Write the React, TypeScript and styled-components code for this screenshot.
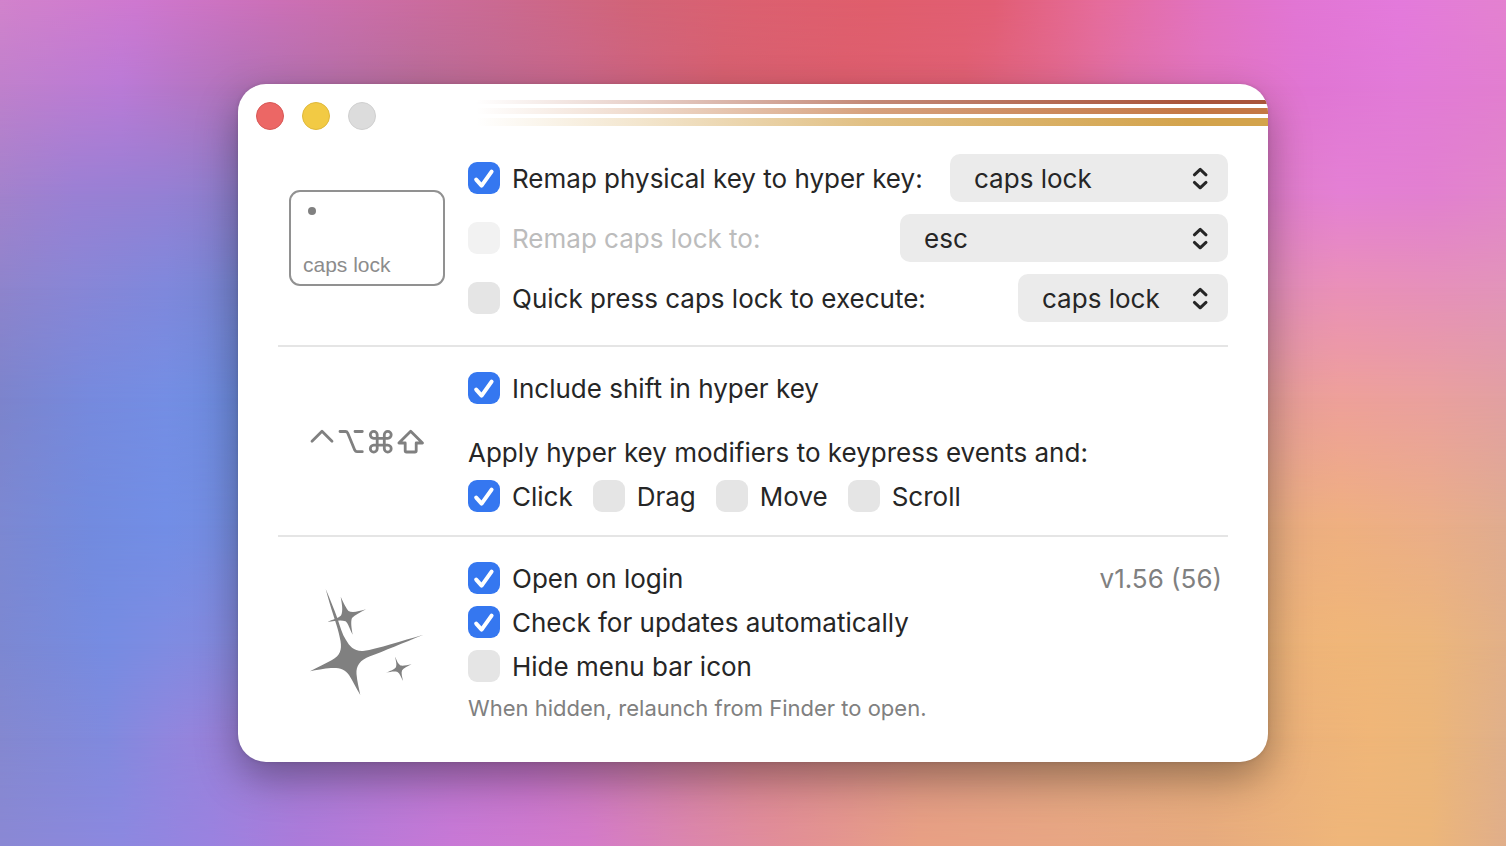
import React, { useId } from "react";
import styled, { createGlobalStyle } from "styled-components";

const GlobalStyle = createGlobalStyle`
  *, *::before, *::after { box-sizing: border-box; }
  body {
    margin: 0;
    font-family: Inter, "Liberation Sans", sans-serif;
    font-size: 26px;
    line-height: 32px;
    color: #262626;
  }
`;

const Desktop = styled.div`
  position: relative;
  isolation: isolate;
  min-height: 100vh;
  display: flex;
  align-items: center;
  justify-content: center;
  padding: 40px;
`;

const Wallpaper = styled.div`
  position: absolute;
  inset: 0;
  z-index: -1;
  overflow: hidden;
`;

/* One horizontal colour run; each band fades in over the one before it. */
const Band = styled.div<{ $colors: string; $from: number; $to: number }>`
  position: absolute;
  inset: 0;
  background: linear-gradient(90deg, ${(p) => p.$colors});
  mask-image: linear-gradient(180deg, transparent ${(p) => p.$from}%, #000 ${(p) => p.$to}%);
`;

const bands = [
  { from: -1, to: 0, colors: "#d283cc 0%, #cf78d0 9%, #cc70b8 18%, #cb6a92 33%, #d26478 42%, #dc6070 50%, #e05e6c 58%, #e25e74 66%, #e66c9c 73%, #e272c0 80%, #e276d4 86%, #e47adc 93%, #e482d0 100%" },
  { from: 0, to: 10, colors: "#c080cc 0%, #bb7ad6 8%, #b272b8 16%, #b86c98 28%, #c8668a 38%, #d66070 48%, #dd5e6e 56%, #e06074 64%, #e2688e 70%, #e070ac 75%, #e274c0 80%, #e075d4 87%, #e27ad8 93%, #e27ed0 100%" },
  { from: 10, to: 23, colors: "#a282cc 0%, #9a80d4 5%, #9480d4 11%, #8c7cc8 16%, #cc6a94 50%, #de7cc8 84%, #e480d4 89%, #e280d0 95%, #e286ca 100%" },
  { from: 23, to: 34, colors: "#8e84cc 0%, #8886d6 5%, #7f88dc 11%, #7684d0 16%, #c080a0 50%, #e08cb8 84%, #ea90b8 89%, #e690ba 95%, #e294ba 100%" },
  { from: 34, to: 47, colors: "#7c84cc 0%, #768ade 6%, #748ee4 11%, #6c8adc 16%, #a080c0 50%, #e49c98 84%, #eea09a 89%, #eaa09e 95%, #e2a0a2 100%" },
  { from: 47, to: 62, colors: "#7c88d2 0%, #728bdf 6%, #728ee6 11%, #748cde 16%, #a080c0 50%, #e8ac82 84%, #efb080 89%, #ebae88 95%, #e0ac90 100%" },
  { from: 62, to: 76, colors: "#7c88d2 0%, #768ce2 7%, #7e8ce2 11%, #8688dc 16%, #a080c0 50%, #ecb27a 84%, #f0b678 89%, #ecb67c 95%, #e2b088 100%" },
  { from: 76, to: 87, colors: "#8488d0 0%, #808ade 7%, #9086de 11%, #9c80d8 16%, #c074c8 35%, #da8890 50%, #dea47e 70%, #ecb27a 86%, #f0b678 91%, #ecb67a 95%, #e0b08a 100%" },
  { from: 87, to: 100, colors: "#8a88d4 0%, #8c88e0 8%, #9a82e0 14%, #ac7ada 20%, #c878d6 30%, #d47aca 39%, #dc86ac 46%, #e28e98 52%, #e8a084 61%, #e8a684 71%, #e6aa7e 80%, #efb67a 89%, #ecb67a 95%, #e0ae8a 100%" },
];

const Window = styled.main`
  width: 100%;
  max-width: 1030px;
  border-radius: 28px;
  background: #fff;
  overflow: hidden;
  box-shadow: 0 16px 40px rgba(0, 0, 0, 0.34), 0 0 4px rgba(0, 0, 0, 0.12);
`;

const TitleBar = styled.header`
  display: flex;
  align-items: flex-start;
  gap: 92px;
  height: 58px;
  padding: 16px 0 0 18px;
`;

const Lights = styled.div`
  display: flex;
  gap: 18px;
  padding-top: 2px;
`;

const Light = styled.button<{ $fill: string; $edge: string }>`
  width: 28px;
  height: 28px;
  padding: 0;
  border: 1px solid ${(p) => p.$edge};
  border-radius: 50%;
  background: ${(p) => p.$fill};
`;

const Stripes = styled.div`
  flex: 1;
  display: flex;
  flex-direction: column;
  gap: 4px;
`;

const Stripe = styled.div<{ $height: number; $color: string }>`
  height: ${(p) => p.$height}px;
  background: linear-gradient(
    90deg,
    ${(p) => p.$color}00 1%,
    ${(p) => p.$color}48 22%,
    ${(p) => p.$color}b0 50%,
    ${(p) => p.$color} 90%
  );
`;

const Content = styled.div`
  padding: 12px 40px 40px;
`;

const Section = styled.section`
  display: flex;
  gap: 12px;
  & + & {
    margin-top: 23px;
    padding-top: 25px;
    border-top: 2px solid #e5e5e5;
  }
`;

const Figure = styled.div`
  flex: 0 0 178px;
  display: flex;
  align-items: center;
  justify-content: center;
`;

const Fields = styled.div`
  flex: 1;
  min-width: 0;
  display: flex;
  flex-direction: column;
  gap: 12px;
`;

const Row = styled.div`
  display: flex;
  align-items: center;
  justify-content: space-between;
  gap: 20px;
`;

const Options = styled.div`
  display: flex;
  flex-wrap: wrap;
  gap: 20px;
`;

const Caption = styled.p`
  margin: 20px 0 0;
  height: 32px;
  padding-top: 1px;
`;

const Hint = styled.p`
  margin: 0;
  font-size: 22px;
  line-height: 28px;
  color: #808080;
`;

const Version = styled.span`
  height: 32px;
  padding: 1px 6px 0 0;
  color: #808080;
`;

const CheckLabel = styled.label<{ $disabled?: boolean }>`
  display: flex;
  align-items: center;
  gap: 12px;
  height: 32px;
  white-space: nowrap;
  color: ${(p) => (p.$disabled ? "#bcbcbc" : "#262626")};
`;

const CheckText = styled.span`
  padding-top: 2px;
`;

const Box = styled.span`
  display: grid;
  width: 32px;
  height: 32px;
  > * {
    grid-area: 1 / 1;
  }
  > svg {
    pointer-events: none;
    visibility: hidden;
  }
  > input:checked + svg {
    visibility: visible;
  }
`;

const BoxInput = styled.input`
  appearance: none;
  width: 32px;
  height: 32px;
  margin: 0;
  border-radius: 9px;
  background: #e5e5e5;
  &:checked {
    background: #3577f0;
  }
  &:disabled {
    background: #f2f2f2;
  }
`;

const SelectWrap = styled.div<{ $width: number }>`
  display: grid;
  align-items: center;
  width: ${(p) => p.$width}px;
  > * {
    grid-area: 1 / 1;
  }
  > svg {
    justify-self: end;
    margin-right: 18px;
    pointer-events: none;
  }
`;

const SelectInput = styled.select`
  appearance: none;
  width: 100%;
  height: 48px;
  padding: 2px 44px 0 24px;
  border: 0;
  border-radius: 10px;
  background: #ebebeb;
  color: #262626;
  font: inherit;
`;

const KeyCap = styled.div`
  display: flex;
  flex-direction: column;
  justify-content: space-between;
  width: 156px;
  height: 96px;
  padding: 15px 12px 7px;
  border: 2px solid #919191;
  border-radius: 11px;
  font-family: "Liberation Sans", sans-serif;
  font-size: 21px;
  line-height: 24px;
  color: #8c8c8c;
`;

const Led = styled.span`
  width: 8px;
  height: 8px;
  margin-left: 5px;
  border-radius: 50%;
  background: #808080;
`;

function Check({ label, checked, disabled }: { label: string; checked?: boolean; disabled?: boolean }) {
  const id = useId();
  return (
    <CheckLabel htmlFor={id} $disabled={disabled}>
      <Box>
        <BoxInput id={id} type="checkbox" defaultChecked={checked} disabled={disabled} />
        <svg width="32" height="32" viewBox="0 0 32 32" fill="none" stroke="#fff" strokeWidth="4" strokeLinecap="round" strokeLinejoin="round" aria-hidden="true">
          <path d="M8.2 17.6 13.6 23.6 23.6 9.6" />
        </svg>
      </Box>
      <CheckText>{label}</CheckText>
    </CheckLabel>
  );
}

function Select({ name, value, width }: { name: string; value: string; width: number }) {
  return (
    <SelectWrap $width={width}>
      <SelectInput aria-label={name} defaultValue={value}>
        <option>{value}</option>
      </SelectInput>
      <svg width="20" height="24" viewBox="0 0 20 24" fill="none" stroke="#262626" strokeWidth="3" strokeLinecap="round" strokeLinejoin="round" aria-hidden="true">
        <path d="M4.400 8.800 10.200 3.400 16 8.800M4.400 16.400 10.200 21.800 16 16.400" />
      </svg>
    </SelectWrap>
  );
}

function ModifierKeys() {
  return (
    <svg width="116" height="28" viewBox="309 428 116 28" fill="none" stroke="#808080" strokeWidth="2.8" strokeLinecap="round" strokeLinejoin="round" role="img" aria-label="Control, option, command, shift">
      <path d="M312 441.200 322 431.200 332 441.200" />
      <path d="M340 431.500H345.500Q347 431.500 347.700 433L354.800 450.200Q355.500 451.700 357 451.700H362.300M355 431.500H362.300" />
      <path d="M377.200 438.300H384.300V445.200H377.200ZM377.200 438.300H373.700A3.450 3.450 0 1 1 377.200 434.800ZM384.300 438.300V434.800A3.450 3.450 0 1 1 387.800 438.300ZM384.300 445.200H387.800A3.450 3.450 0 1 1 384.300 448.700ZM377.200 445.200V448.700A3.450 3.450 0 1 1 373.700 445.200Z" />
      <path d="M410.700 431.200 422.500 443H416.200V450.700Q416.200 452 414.900 452H406.500Q405.200 452 405.200 450.700V443H398.900Z" />
    </svg>
  );
}

function Sparkles() {
  return (
    <svg width="116" height="108" viewBox="310 588 116 108" fill="#808080" aria-hidden="true">
      <path d="M326.700 589C331 599 335 609 338.300 618C341 626 343 634 347 640C350.500 646 355 651.500 364 651C380 648.500 402 641 424.500 634.700C404 643 385 651 371 656.300C361 660 357 666 357.500 674C358.200 682 360 688 361.300 695C357 688 354 681 350 675C346 669 340 667.500 332 668C325 668.600 317 670 311 671.300C319 667 326 664 333 660C341 655.500 343 650 341.500 641C339.500 630 336.500 622 334.300 615C331.500 606 329 598 326.700 589Z" />
      <path d="M341.700 596.700C344 602 347 608 349.500 611C353 613 360 611.500 367 609.300C361 612.500 356 615 353 618C351.500 622 352.500 628 353.700 634.700C350.500 629 349.500 623.500 346.500 621.300C342 619.500 336 620.800 328.500 622C333 619.500 339 618.500 342 615.500C344.500 611 342.700 603 341.700 596.700Z" />
      <path d="M396 656.500C398 661 399 664 401.500 665.500C404.500 666 408.500 665 412.500 664.300C408.500 666.500 404.500 668 403 670.500C402 673.500 403.300 677 404 681C402 677.500 401 673.500 398.500 672C395 671 391 672 387 672.800C391 671 395.500 669.500 397 667C398 664 396.800 660.500 396 656.500Z" />
    </svg>
  );
}

export default function App() {
  return (
    <Desktop>
      <GlobalStyle />
      <Wallpaper aria-hidden="true">
        {bands.map((b) => (
          <Band key={b.to} $colors={b.colors} $from={b.from} $to={b.to} />
        ))}
      </Wallpaper>
      <Window>
        <TitleBar>
          <Lights>
            <Light type="button" aria-label="Close" $fill="#ec6765" $edge="#d85856" />
            <Light type="button" aria-label="Minimize" $fill="#f2ca44" $edge="#dfb83a" />
            <Light type="button" aria-label="Zoom" disabled $fill="#dcdcdc" $edge="#d0d0d0" />
          </Lights>
          <Stripes>
            <Stripe $height={4} $color="#a9543a" />
            <Stripe $height={6} $color="#c47845" />
            <Stripe $height={8} $color="#d3a34c" />
          </Stripes>
        </TitleBar>
        <Content>
          <Section>
            <Figure>
              <KeyCap>
                <Led />
                caps lock
              </KeyCap>
            </Figure>
            <Fields>
              <Row>
                <Check label="Remap physical key to hyper key:" checked />
                <Select name="Physical key" value="caps lock" width={278} />
              </Row>
              <Row>
                <Check label="Remap caps lock to:" disabled />
                <Select name="Caps lock target" value="esc" width={328} />
              </Row>
              <Row>
                <Check label="Quick press caps lock to execute:" />
                <Select name="Quick press action" value="caps lock" width={210} />
              </Row>
            </Fields>
          </Section>
          <Section>
            <Figure>
              <ModifierKeys />
            </Figure>
            <Fields>
              <Check label="Include shift in hyper key" checked />
              <Caption>Apply hyper key modifiers to keypress events and:</Caption>
              <Options>
                <Check label="Click" checked />
                <Check label="Drag" />
                <Check label="Move" />
                <Check label="Scroll" />
              </Options>
            </Fields>
          </Section>
          <Section>
            <Figure>
              <Sparkles />
            </Figure>
            <Fields>
              <Row>
                <Check label="Open on login" checked />
                <Version>v1.56 (56)</Version>
              </Row>
              <Check label="Check for updates automatically" checked />
              <Check label="Hide menu bar icon" />
              <Hint>When hidden, relaunch from Finder to open.</Hint>
            </Fields>
          </Section>
        </Content>
      </Window>
    </Desktop>
  );
}
